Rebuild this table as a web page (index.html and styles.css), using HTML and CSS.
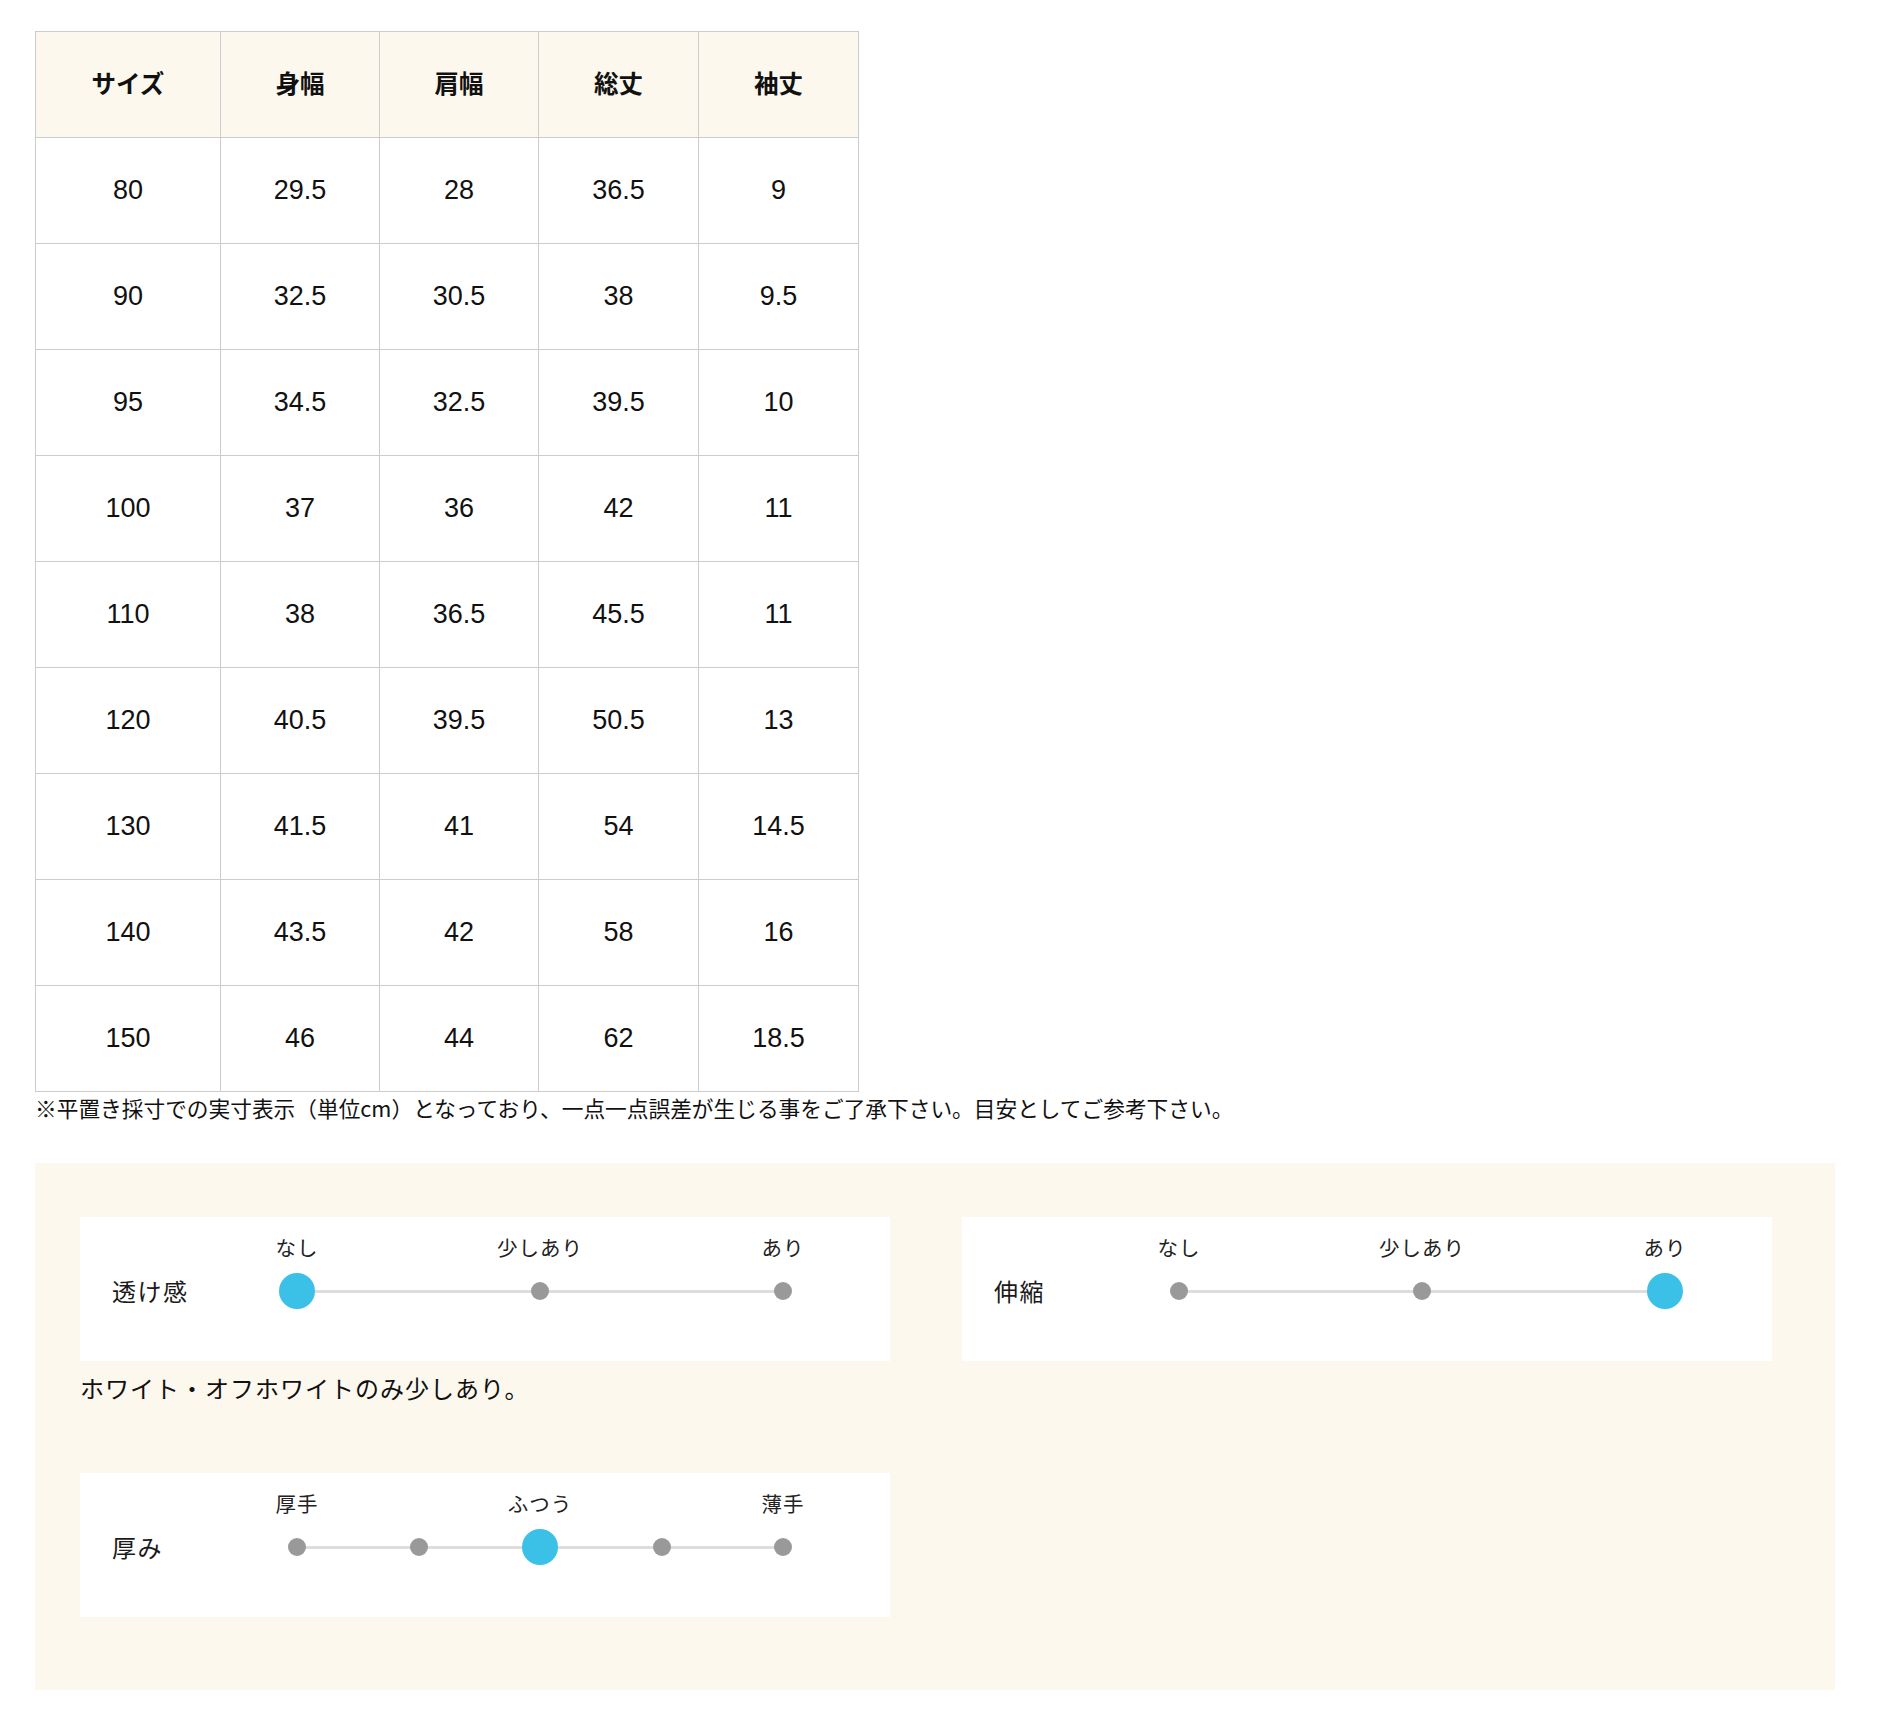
FILE: index.html
```html
<!DOCTYPE html>
<html lang="ja">
<head>
<meta charset="utf-8">
<link rel="stylesheet" href="styles.css">
</head>
<body>
<div class="page">
  <table class="size-table">
    <colgroup>
      <col class="c1"><col class="c2"><col class="c3"><col class="c4"><col class="c5">
    </colgroup>
    <thead>
      <tr><th>サイズ</th><th>身幅</th><th>肩幅</th><th>総丈</th><th>袖丈</th></tr>
    </thead>
    <tbody>
      <tr><td>80</td><td>29.5</td><td>28</td><td>36.5</td><td>9</td></tr>
      <tr><td>90</td><td>32.5</td><td>30.5</td><td>38</td><td>9.5</td></tr>
      <tr><td>95</td><td>34.5</td><td>32.5</td><td>39.5</td><td>10</td></tr>
      <tr><td>100</td><td>37</td><td>36</td><td>42</td><td>11</td></tr>
      <tr><td>110</td><td>38</td><td>36.5</td><td>45.5</td><td>11</td></tr>
      <tr><td>120</td><td>40.5</td><td>39.5</td><td>50.5</td><td>13</td></tr>
      <tr><td>130</td><td>41.5</td><td>41</td><td>54</td><td>14.5</td></tr>
      <tr><td>140</td><td>43.5</td><td>42</td><td>58</td><td>16</td></tr>
      <tr><td>150</td><td>46</td><td>44</td><td>62</td><td>18.5</td></tr>
    </tbody>
  </table>
  <p class="note">※平置き採寸での実寸表示（単位cm）となっており、一点一点誤差が生じる事をご了承下さい。目安としてご参考下さい。</p>

  <section class="panel">
    <div class="panel-row">
      <div class="panel-col">
        <div class="card">
          <div class="card-label">透け感</div>
          <div class="scale-labels"><span>なし</span><span>少しあり</span><span>あり</span></div>
          <div class="scale-dots">
            <span class="slot"><i class="dot on"></i></span>
            <span class="slot"><i class="dot"></i></span>
            <span class="slot"><i class="dot"></i></span>
          </div>
        </div>
        <p class="caption">ホワイト・オフホワイトのみ少しあり。</p>
      </div>
      <div class="panel-col">
        <div class="card">
          <div class="card-label">伸縮</div>
          <div class="scale-labels"><span>なし</span><span>少しあり</span><span>あり</span></div>
          <div class="scale-dots">
            <span class="slot"><i class="dot"></i></span>
            <span class="slot"><i class="dot"></i></span>
            <span class="slot"><i class="dot on"></i></span>
          </div>
        </div>
      </div>
    </div>
    <div class="card card-third">
      <div class="card-label">厚み</div>
      <div class="scale-labels"><span>厚手</span><span>ふつう</span><span>薄手</span></div>
      <div class="scale-dots">
        <span class="slot"><i class="dot"></i></span>
        <span class="slot"><i class="dot"></i></span>
        <span class="slot"><i class="dot on"></i></span>
        <span class="slot"><i class="dot"></i></span>
        <span class="slot"><i class="dot"></i></span>
      </div>
    </div>
  </section>
</div>
</body>
</html>
```

FILE: styles.css
```css
html, body {
  margin: 0;
  padding: 0;
  background: #ffffff;
}

body {
  font-family: "Noto Sans CJK JP", "Noto Sans", sans-serif;
  color: #111111;
}

.page {
  padding: 31px 0 0 35px;
  width: 1800px;
}

/* ---------- size table ---------- */
.size-table {
  border-collapse: collapse;
  table-layout: fixed;
  width: 823px;
}

.size-table col.c1 { width: 185px; }
.size-table col.c2 { width: 159px; }
.size-table col.c3 { width: 159px; }
.size-table col.c4 { width: 160px; }
.size-table col.c5 { width: 160px; }

.size-table th,
.size-table td {
  border: 1px solid #cccccc;
  padding: 0;
  height: 105px;
  text-align: center;
  vertical-align: middle;
}

.size-table th {
  background: #fcf8ee;
  font-family: "Noto Sans CJK JP", sans-serif;
  font-weight: 700;
  font-size: 24.5px;
  color: #111111;
  height: 101px;
  padding-bottom: 4px;
}

.size-table td {
  font-family: "Liberation Sans", "Noto Sans CJK JP", sans-serif;
  font-size: 27px;
  color: #111111;
}

.note {
  margin: 0;
  font-size: 21.7px;
  line-height: 32px;
  color: #111111;
  white-space: nowrap;
}

/* ---------- feel panel ---------- */
.panel {
  margin-top: 39px;
  background: #fcf8ee;
  padding: 54px 62px 73px 45px;
  width: 1800px;
  box-sizing: border-box;
}

.panel-row {
  display: flex;
  gap: 72px;
}

.panel-col {
  width: 810px;
}

.card {
  background: #ffffff;
  width: 810px;
  height: 144px;
  box-sizing: border-box;
  padding: 18px 0 0 32px;
  display: grid;
  grid-template-columns: 167px 522px;
  grid-template-rows: 24px 36px;
  row-gap: 14px;
}

.card-third {
  margin-top: 67px;
}

.card-label {
  grid-column: 1;
  grid-row: 2;
  align-self: center;
  font-size: 24px;
  letter-spacing: 1.5px;
  color: #1a1a1a;
  white-space: nowrap;
  margin-top: -2px;
}

.scale-labels {
  grid-column: 2;
  grid-row: 1;
  display: flex;
  justify-content: space-between;
}

.scale-labels span {
  width: 36px;
  display: flex;
  justify-content: center;
  white-space: nowrap;
  font-size: 20.5px;
  line-height: 24px;
  letter-spacing: 1px;
  color: #222222;
}

.scale-dots {
  grid-column: 2;
  grid-row: 2;
  position: relative;
  display: flex;
  justify-content: space-between;
  align-items: center;
}

.scale-dots::before {
  content: "";
  position: absolute;
  left: 18px;
  right: 18px;
  top: 17px;
  height: 3px;
  background: #dddddd;
}

.slot {
  position: relative;
  width: 36px;
  height: 36px;
  display: flex;
  align-items: center;
  justify-content: center;
}

.dot {
  display: block;
  width: 18px;
  height: 18px;
  border-radius: 50%;
  background: #999999;
}

.dot.on {
  width: 36px;
  height: 36px;
  background: #3bc1e8;
}

.caption {
  margin: 9px 0 0 0;
  font-size: 24px;
  letter-spacing: 1px;
  line-height: 36px;
  color: #111111;
  white-space: nowrap;
}
```
